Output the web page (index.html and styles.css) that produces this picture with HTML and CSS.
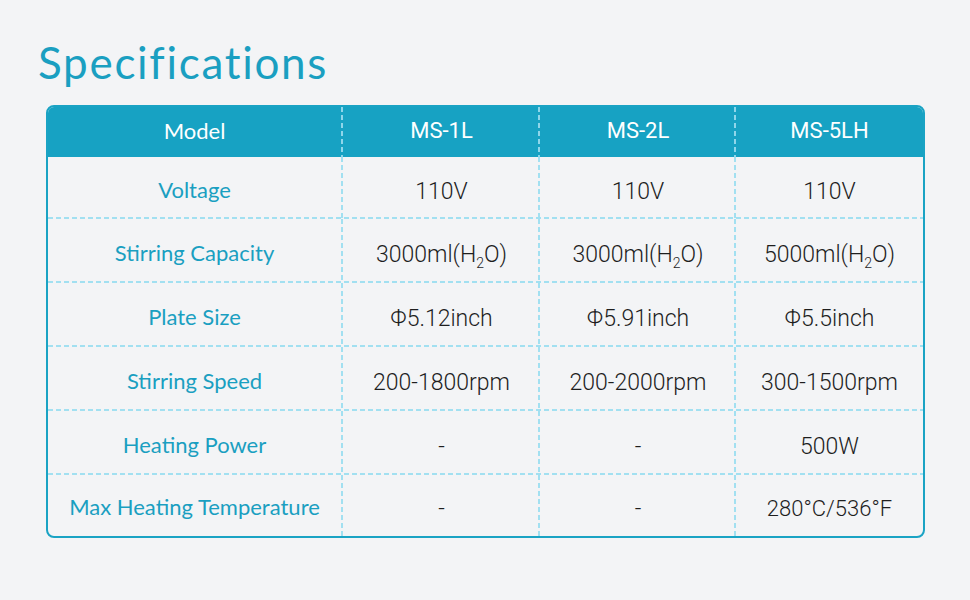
FILE: index.html
```html
<!DOCTYPE html>
<html>
<head>
<meta charset="utf-8">
<link rel="stylesheet" href="styles.css">
</head>
<body>
<div class="page">
  <h1 class="title">Specifications</h1>
  <div class="table">
    <div class="row head">
      <div class="cell">Model</div>
      <div class="cell">MS-1L</div>
      <div class="cell">MS-2L</div>
      <div class="cell">MS-5LH</div>
    </div>
    <div class="row r1">
      <div class="cell label">Voltage</div>
      <div class="cell">110V</div>
      <div class="cell">110V</div>
      <div class="cell">110V</div>
    </div>
    <div class="row">
      <div class="cell label">Stirring Capacity</div>
      <div class="cell"><span>3000ml(H<sub>2</sub>O)</span></div>
      <div class="cell"><span>3000ml(H<sub>2</sub>O)</span></div>
      <div class="cell"><span>5000ml(H<sub>2</sub>O)</span></div>
    </div>
    <div class="row">
      <div class="cell label">Plate Size</div>
      <div class="cell">Φ5.12inch</div>
      <div class="cell">Φ5.91inch</div>
      <div class="cell">Φ5.5inch</div>
    </div>
    <div class="row">
      <div class="cell label">Stirring Speed</div>
      <div class="cell">200-1800rpm</div>
      <div class="cell">200-2000rpm</div>
      <div class="cell">300-1500rpm</div>
    </div>
    <div class="row">
      <div class="cell label">Heating Power</div>
      <div class="cell">-</div>
      <div class="cell">-</div>
      <div class="cell">500W</div>
    </div>
    <div class="row last">
      <div class="cell label">Max Heating Temperature</div>
      <div class="cell">-</div>
      <div class="cell">-</div>
      <div class="cell temp">280°C/536°F</div>
    </div>
  </div>
</div>
</body>
</html>
```

FILE: styles.css
```css
html, body {
  margin: 0;
  padding: 0;
  background: #f3f4f6;
}
.page {
  width: 970px;
  height: 600px;
  padding: 36px 0 0 0;
  box-sizing: border-box;
}
.title {
  margin: 0 0 0 38px;
  font-family: Lato, "Noto Sans", sans-serif;
  font-weight: 400;
  font-size: 44px;
  letter-spacing: 1.7px;
  line-height: 52px;
  color: #1a9fc1;
  height: 69px;
}
.table {
  margin-left: 46px;
  width: 879px;
  border: 2px solid #1aa3c4;
  border-radius: 8px;
  overflow: hidden;
  box-sizing: border-box;
}
.row {
  display: grid;
  grid-template-columns: 295px 197px 196px 1fr;
  height: 64px;
  box-sizing: border-box;
  background-image: repeating-linear-gradient(to right, #a2e0f1 0 5px, transparent 5px 8px);
  background-size: 100% 2px;
  background-position: left bottom;
  background-repeat: no-repeat;
}
.row.r1 { height: 62px; }
.row.last { height: 61px; background-image: none; }
.row.head {
  height: 50px;
  background: #17a2c3;
}
.cell {
  display: flex;
  align-items: center;
  justify-content: center;
  font-family: Roboto, "Liberation Sans", sans-serif;
  font-weight: 300;
  font-size: 23px;
  color: #1e1e1e;
  padding-top: 6px;
  box-sizing: border-box;
  background-image: repeating-linear-gradient(to bottom, #a2e0f1 0 5px, transparent 5px 8px);
  background-size: 2px 100%;
  background-position: right top;
  background-repeat: no-repeat;
}
.cell:first-child { margin-left: -2px; }
.cell:last-child { background-image: none; }
.cell.temp { font-size: 22px; }
.head .cell {
  color: #ffffff;
  font-family: Lato, "Noto Sans", sans-serif;
  font-weight: 400;
  font-size: 22px;
  padding-top: 0;
  padding-bottom: 3px;
  background-image: repeating-linear-gradient(to bottom, #8fd6ea 0 5px, transparent 5px 8px);
}
.head .cell:nth-child(n+2) {
  font-family: Roboto, "Liberation Sans", sans-serif;
  font-weight: 400;
  font-size: 22px;
}
.head .cell:last-child { background-image: none; }
.cell.label {
  font-family: Lato, "Noto Sans", sans-serif;
  font-weight: 400;
  font-size: 22px;
  padding-top: 2px;
  color: #1a9fc1;
}
sub {
  font-size: 14px;
  vertical-align: -6px;
  line-height: 0;
}
```
